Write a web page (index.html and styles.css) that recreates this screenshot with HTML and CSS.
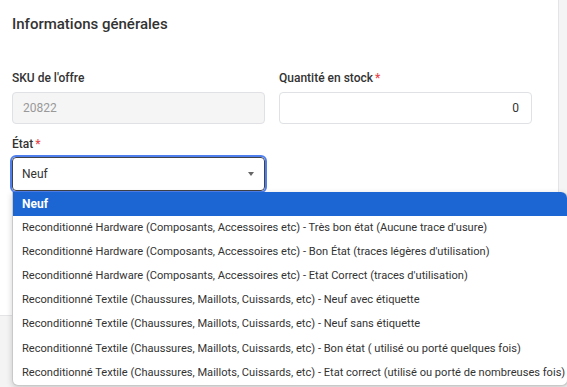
FILE: index.html
```html
<!DOCTYPE html>
<html lang="fr">
<head>
    <meta charset="UTF-8">
    <title>Informations générales</title>
    <link rel="stylesheet" href="styles.css">
</head>
<body>

    <div class="card">
        <h2 class="card-title">Informations générales</h2>

        <div class="row">
            <div class="field">
                <label class="label">SKU de l'offre</label>
                <div class="input disabled">20822</div>
            </div>
            <div class="field">
                <label class="label">Quantité en stock<span class="req">*</span></label>
                <div class="input number">0</div>
            </div>
        </div>

        <div class="row">
            <div class="field">
                <label class="label">État<span class="req">*</span></label>
                <div class="select-wrap">
                    <div class="select">
                        <span>Neuf</span>
                        <span class="caret"></span>
                    </div>
                    <ul class="options">
                        <li class="option selected">Neuf</li>
                        <li class="option">Reconditionné Hardware (Composants, Accessoires etc) - Très bon état (Aucune trace d'usure)</li>
                        <li class="option">Reconditionné Hardware (Composants, Accessoires etc) - Bon État (traces légères d'utilisation)</li>
                        <li class="option">Reconditionné Hardware (Composants, Accessoires etc) - Etat Correct (traces d'utilisation)</li>
                        <li class="option">Reconditionné Textile (Chaussures, Maillots, Cuissards, etc) - Neuf avec étiquette</li>
                        <li class="option">Reconditionné Textile (Chaussures, Maillots, Cuissards, etc) - Neuf sans étiquette</li>
                        <li class="option">Reconditionné Textile (Chaussures, Maillots, Cuissards, etc) - Bon état ( utilisé ou porté quelques fois)</li>
                        <li class="option">Reconditionné Textile (Chaussures, Maillots, Cuissards, etc) - Etat correct (utilisé ou porté de nombreuses fois)</li>
                    </ul>
                </div>
            </div>
        </div>
    </div>

</body>
</html>
```
FILE: styles.css
```css
html, body { height: 100%; }
body { margin: 0; min-height: 387px; background: #f4f4f5; font-family: Roboto, "Liberation Sans", sans-serif; color: #333; }
.card { background: #fff; width: 559px; height: 316px; box-sizing: border-box; padding: 14px 12px 0; border-right: 1px solid #e4e4e6; border-bottom: 1px solid #e4e4e6; }
.card-title { margin: 0 0 36px; font-size: 15px; line-height: 20px; font-weight: 500; color: #333; }
.row { display: grid; grid-template-columns: 253px 253px; column-gap: 14px; margin-bottom: 12px; }
.field { display: flex; flex-direction: column; }
.label { font-size: 12px; line-height: 16px; font-weight: 500; color: #333; margin-bottom: 6px; }
.req { color: #e5484d; margin-left: 2px; }
.input { height: 32px; box-sizing: border-box; border: 1px solid #dfe1e5; border-radius: 4px; padding: 0 10px; font-size: 12px; line-height: 30px; background: #fff; }
.input.disabled { background: #f5f5f5; color: #999; }
.input.number { text-align: right; padding-right: 12px; }

.select-wrap { position: relative; margin-top: -1px; }
.select { height: 34px; box-sizing: border-box; border: 1px solid #3f4348; border-radius: 4px; outline: 2px solid #4f7fee; outline-offset: 0; padding: 0 9px; display: flex; align-items: center; justify-content: space-between; font-size: 12px; }
.caret { width: 0; height: 0; border-left: 3.5px solid transparent; border-right: 3.5px solid transparent; border-top: 4px solid #666; margin-right: 1px; }

.options { position: absolute; z-index: 10; top: 35px; left: 0; width: 554px; margin: 0; padding: 0; list-style: none; background: #fff; border: 1px solid #c9c9c9; border-top: none; border-radius: 0 6px 6px 6px; box-shadow: 0 2px 6px rgba(0, 0, 0, 0.18); }
.option { height: 24.1px; line-height: 24px; padding: 0 9px; font-size: 11.1px; color: #333; white-space: nowrap; }
.option.selected { background: #1b66d2; color: #fff; font-weight: 700; font-size: 12px; border-radius: 0 6px 0 0; }
```
